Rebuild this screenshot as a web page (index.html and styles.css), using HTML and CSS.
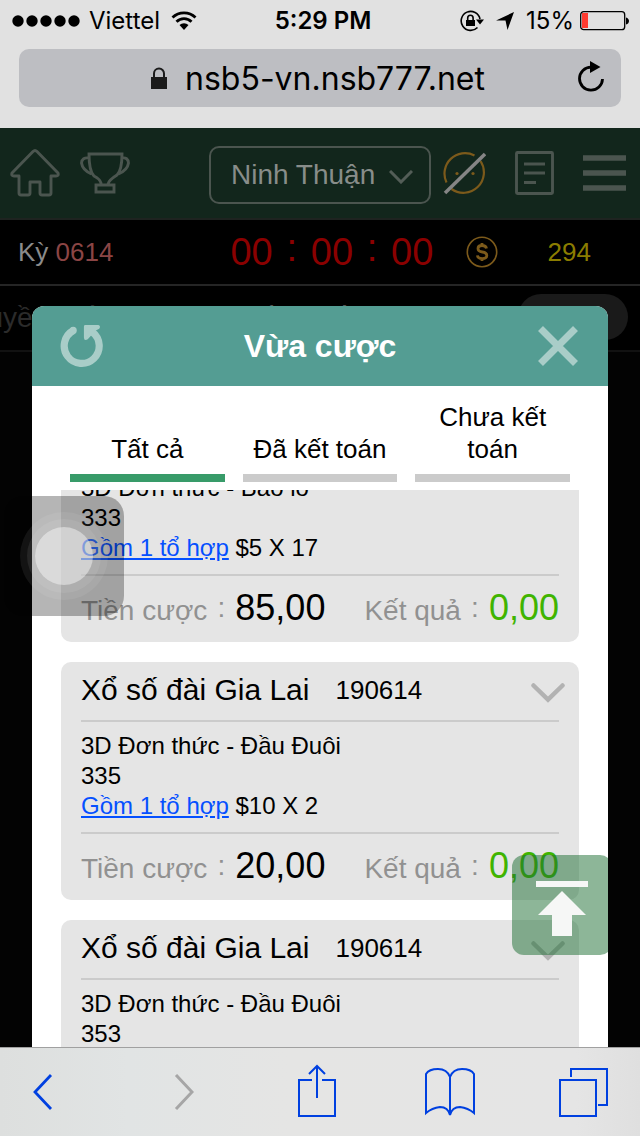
FILE: index.html
```html
<!DOCTYPE html>
<html lang="vi">
<head>
<meta charset="utf-8">
<meta name="viewport" content="width=device-width, initial-scale=1">
<title>Vừa cược</title>
<link rel="stylesheet" href="styles.css">
</head>
<body>
<header class="chrome">
  <div class="status">
    <div class="status-left">
      <svg width="68" height="12" viewBox="0 0 68 12"><circle cx="6" cy="6" r="5.7"/><circle cx="20" cy="6" r="5.7"/><circle cx="34" cy="6" r="5.7"/><circle cx="48" cy="6" r="5.7"/><circle cx="62" cy="6" r="5.7"/></svg>
      <span>Viettel</span>
      <svg class="wifi" width="26" height="20" viewBox="0 0 26 20"><path d="M1.500 6.500a16.500 16.500 0 0 1 23 0M5.500 10.800a10.500 10.500 0 0 1 15 0" fill="none" stroke="#000" stroke-width="2.800"/><path d="M8.500 14a6.500 6.500 0 0 1 9 0L13 19z"/></svg>
    </div>
    <span class="time">5:29 PM</span>
    <div class="status-right">
      <svg width="24" height="22" viewBox="0 0 24 22"><path d="M17.500 17.500A9.500 9.500 0 1 1 20 9" fill="none" stroke="#000" stroke-width="1.600"/><path d="M16 9.500h8l-4 5zM6 10h9v6H6z"/><path d="M7.700 10V8a2.700 2.700 0 0 1 5.400 0v2" fill="none" stroke="#000" stroke-width="1.600"/></svg>
      <svg width="18" height="18" viewBox="0 0 18 18"><path d="M18 0L11.500 18 9.500 8.500H0z"/></svg>
      <span>15%</span>
      <svg class="battery" width="50" height="20" viewBox="0 0 50 20"><rect x=".7" y=".7" width="44" height="18" rx="3" fill="none" stroke="#000" stroke-width="1.300"/><rect x="2" y="2" width="6" height="15" fill="#ff3b30"/><path d="M46 6.500c4 1 4 6 0 7z"/></svg>
    </div>
  </div>
  <div class="address">
    <span class="url"><svg width="16" height="22" viewBox="0 0 16 22"><path d="M0 10h16v12H0z" fill="#1b1b1b"/><path d="M3 11V6.500a5 5 0 0 1 10 0V11" fill="none" stroke="#1b1b1b" stroke-width="2"/></svg>nsb5-vn.nsb777.net</span>
    <button class="reload" aria-label="Reload"><svg width="28" height="32" viewBox="0 0 28 32"><path d="M14 6.200A11.500 11.500 0 1 0 25.500 18" fill="none" stroke="#000" stroke-width="2.800"/><path d="M13 0l10.500 6L13 12z"/></svg></button>
  </div>
</header>

<main class="page">
  <nav class="topbar">
    <div class="links">
      <a href="#" aria-label="Home"><svg width="50" height="50" viewBox="0 0 50 50"><path d="M23 3.500q2-2 4 0L48 25q1 3-2 3h-5v17q0 2-2 2h-7q-2 0-2-2V34H20v11q0 2-2 2h-7q-2 0-2-2V28H4q-3 0-2-3z" fill="none" stroke="#4b554f" stroke-width="2.900" stroke-linejoin="round"/></svg></a>
      <a href="#" aria-label="Trophy"><svg width="50" height="44" viewBox="0 0 50 44"><path d="M9 3h33q0 16-5 21-8 5-9 9v1h6v7H16v-7h5v-2q-1-4-7-7Q9 20 9 3zM9 7Q2 6 1.500 12q1 7 10 11M42 7q6-1 6.500 5-1 7-10 11M16 34h18" fill="none" stroke="#4b554f" stroke-width="2.900"/></svg></a>
    </div>
    <div class="picker">
      <select aria-label="Khu vực"><option>Ninh Thuận</option></select>
      <svg width="24" height="14" viewBox="0 0 24 14"><path d="M1 1l11 11L23 1" fill="none" stroke="#535d57" stroke-width="3"/></svg>
    </div>
    <div class="tools">
      <button aria-label="Mute"><svg width="43" height="44" viewBox="0 0 43 44"><path d="M31.500 4.500A20.500 20.500 0 0 0 3.500 31.500M37.500 10A20.500 20.500 0 0 1 8.500 38" fill="none" stroke="#7c5a1b" stroke-width="2.200"/><circle cx="14" cy="22.500" r="1.600" fill="#7c5a1b"/><circle cx="30" cy="22.500" r="1.600" fill="#7c5a1b"/><path d="M2 42L42 3" stroke="#858585" stroke-width="3.500"/></svg></button>
      <button aria-label="Notes"><svg width="39" height="44" viewBox="0 0 39 44"><rect x="1.500" y="1.500" width="36" height="41" rx="1" fill="none" stroke="#4b554f" stroke-width="2.900"/><path d="M9 13h21M9 22h21M9 31.500h12" stroke="#4b554f" stroke-width="3"/></svg></button>
      <button aria-label="Menu"><svg width="43" height="36" viewBox="0 0 43 36"><path d="M0 3h43M0 18h43M0 33h43" stroke="#4b554f" stroke-width="5.500"/></svg></button>
    </div>
  </nav>
  <section class="draw">
    <div class="period">Kỳ <span>0614</span></div>
    <div class="clock">00<i class="colon">:</i>00<i class="colon">:</i>00</div>
    <svg class="coin" width="32" height="32" viewBox="0 0 32 32"><circle cx="16" cy="16" r="14.700" fill="none" stroke="#7c5a1b" stroke-width="1.600"/><path d="M20.500 12.500q-.6-3-4.500-3-4 0-4 3t4.300 3.500q4.500.6 4.500 3.600 0 3-4.500 3-4.600 0-4.900-3.200M16 7v3M16 22v3" fill="none" stroke="#7c5a1b" stroke-width="2.800"/></svg>
    <div class="balance">294</div>
  </section>
  <section class="games">
    <span>Truyền thống</span>
    <span class="bright">Truyền thống</span>
    <i class="pill"></i>
  </section>

  <section class="modal" role="dialog" aria-labelledby="dialog-title">
    <header class="modal-head">
      <button aria-label="Refresh"><svg width="44" height="44" viewBox="0 0 46 46"><path d="M14 6.800A18.300 18.300 0 1 0 34 8.500" fill="none" stroke="#a9cdc8" stroke-width="7.500"/><circle cx="13.800" cy="6.700" r="3.700" fill="#a9cdc8"/><path d="M26 1h14q3 1 1 4l-4 2L29 16q-4 2-4-2V3q0-2 1-2z" fill="#a9cdc8"/></svg></button>
      <h1 id="dialog-title">Vừa cược</h1>
      <button aria-label="Close"><svg width="40" height="40" viewBox="0 0 40 40"><path d="M2.500 2.500l35 35M37.500 2.500l-35 35" stroke="#a9cdc8" stroke-width="7"/></svg></button>
    </header>
    <div class="tabs">
      <button class="tab active">Tất cả</button>
      <button class="tab">Đã kết toán</button>
      <button class="tab">Chưa kết toán</button>
    </div>
    <div class="scroller">
      <div class="list">
        <article class="card">
          <header class="card-head"><h2>Xổ số đài Gia Lai</h2><span>190614</span><svg width="34" height="20" viewBox="0 0 34 20"><path d="M2.500 2.500L17 16.500 31.500 2.500" fill="none" stroke="#b2b2b2" stroke-width="4.500" stroke-linecap="round"/></svg></header>
          <div class="bet">3D Đơn thức - Bao lô<br>333<br><a href="#">Gồm 1 tổ hợp</a> $5 X 17</div>
          <footer class="sum"><div>Tiền cược<i class="colon">:</i><b>85,00</b></div><div>Kết quả<i class="colon">:</i><b class="win">0,00</b></div></footer>
        </article>
        <article class="card">
          <header class="card-head"><h2>Xổ số đài Gia Lai</h2><span>190614</span><svg width="34" height="20" viewBox="0 0 34 20"><path d="M2.500 2.500L17 16.500 31.500 2.500" fill="none" stroke="#b2b2b2" stroke-width="4.500" stroke-linecap="round"/></svg></header>
          <div class="bet">3D Đơn thức - Đầu Đuôi<br>335<br><a href="#">Gồm 1 tổ hợp</a> $10 X 2</div>
          <footer class="sum"><div>Tiền cược<i class="colon">:</i><b>20,00</b></div><div>Kết quả<i class="colon">:</i><b class="win">0,00</b></div></footer>
        </article>
        <article class="card">
          <header class="card-head"><h2>Xổ số đài Gia Lai</h2><span>190614</span><svg width="34" height="20" viewBox="0 0 34 20"><path d="M2.500 2.500L17 16.500 31.500 2.500" fill="none" stroke="#b2b2b2" stroke-width="4.500" stroke-linecap="round"/></svg></header>
          <div class="bet">3D Đơn thức - Đầu Đuôi<br>353</div>
        </article>
      </div>
    </div>
    <button class="to-top" aria-label="Top"><svg width="52" height="58" viewBox="0 0 52 58"><path d="M0 1h52v6H0zM26 11l24 24H36v21H16V35H2z" fill="#f6f7f6"/></svg></button>
  </section>
  <div class="touch"><i></i></div>
</main>

<nav class="toolbar">
  <button class="back" aria-label="Back"><svg width="20" height="36" viewBox="0 0 20 36"><path d="M18 1L2 18l16 17" fill="none" stroke="#0040e0" stroke-width="2.800"/></svg></button>
  <button aria-label="Forward"><svg width="20" height="36" viewBox="0 0 20 36"><path d="M2 1l16 17L2 35" fill="none" stroke="#a6a6a6" stroke-width="3"/></svg></button>
  <button class="share" aria-label="Share"><svg width="40" height="54" viewBox="0 0 40 54"><path d="M15 17H2v36h36V17H25M20 35V3M12 11l8-8 8 8" fill="none" stroke="#0040e0" stroke-width="2"/></svg></button>
  <button aria-label="Bookmarks"><svg width="50" height="50" viewBox="0 0 50 50"><path d="M25 48V10Q22 2 13 2 4 2 1 7v39q6-5 14-6 8 0 10 8 2-8 10-8 8 1 14 6V7Q46 2 37 2 28 2 25 10" fill="none" stroke="#0040e0" stroke-width="2"/></svg></button>
  <button aria-label="Tabs"><svg width="50" height="50" viewBox="0 0 50 50"><path d="M2 13h36v36H2zM13 10V2h36v36h-9" fill="none" stroke="#0040e0" stroke-width="2"/></svg></button>
</nav>
</body>
</html>
```
FILE: styles.css
```css
* {
  box-sizing: border-box;
}

body {
  margin: 0;
  height: 100vh;
  display: flex;
  flex-direction: column;
  overflow: hidden;
  background: #000;
  color: #000;
  font-family: "Liberation Sans", "Noto Sans CJK TC", sans-serif;
}

button {
  margin: 0;
  padding: 0;
  border: 0;
  background: none;
  color: inherit;
  font: inherit;
}

svg {
  display: block;
  flex: none;
}

/* Separator that takes one full em, with the mark in its middle */
.colon {
  display: inline-block;
  width: 1em;
  font-style: normal;
  text-align: center;
}

/* Browser chrome */
.chrome {
  flex: none;
  padding-bottom: 21px;
  background: #e1e1e1;
  font-family: Inter, sans-serif;
}

.status {
  display: grid;
  grid-template-columns: 1fr auto 1fr;
  align-items: center;
  height: 41px;
  padding: 0 10px 0 12px;
  font-size: 24px;
}

.status-left,
.status-right {
  display: flex;
  align-items: center;
  gap: 9px;
}

.status-left .wifi {
  margin-left: 2px;
}

.status-right {
  justify-content: flex-end;
  gap: 12px;
}

.status-right .battery {
  margin-left: -6px;
}

.time {
  padding-left: 4px;
  font-weight: 600;
}

.address {
  position: relative;
  display: flex;
  align-items: center;
  justify-content: center;
  height: 58px;
  margin: 8px 19px 0;
  padding-right: 4px;
  border-radius: 10px;
  background: #bdbec2;
}

.url {
  display: flex;
  align-items: center;
  gap: 18px;
  font-size: 32px;
}

.reload {
  position: absolute;
  right: 16px;
  top: 12px;
}

/* Dimmed page */
.page {
  position: relative;
  flex: 1;
  min-height: 0;
  overflow: hidden;
  background: #030303;
}

.topbar {
  display: flex;
  align-items: center;
  height: 92px;
  padding: 0 14px 0 10px;
  border-bottom: 2px solid #1e2320;
  background: #12261c;
}

.links {
  display: flex;
  align-items: center;
  gap: 20px;
}

.picker {
  position: relative;
  width: 222px;
  margin: 4px 12px 0 auto;
}

.picker select {
  appearance: none;
  display: block;
  width: 100%;
  height: 58px;
  padding: 0 20px 2px;
  border: 2px solid #4b554f;
  border-radius: 10px;
  background: none;
  color: #888d8a;
  font: inherit;
  font-size: 28px;
}

.picker svg {
  position: absolute;
  right: 18px;
  top: 24px;
}

.tools {
  display: flex;
  align-items: center;
  gap: 29px;
}

.draw {
  display: grid;
  grid-template-columns: 36fr auto 33px auto 24fr;
  align-items: center;
  height: 66px;
  padding-left: 18px;
  border-bottom: 2px solid #252525;
  background: #000;
  font-size: 26px;
}

.period {
  color: #8b8b8b;
}

.period span {
  color: #8b4545;
}

.clock {
  color: #8b0000;
  font-size: 38px;
  line-height: 60px;
}

.clock .colon {
  line-height: 50px;
  vertical-align: 4px;
}

.coin {
  grid-column: 4;
}

.balance {
  color: #8b7d00;
  text-align: center;
}

.games {
  display: flex;
  align-items: center;
  gap: 88px;
  height: 66px;
  margin-left: -38px;
  padding-right: 12px;
  border-bottom: 2px solid #121212;
  background: #000;
  color: #2b2b2b;
  font-size: 28px;
  white-space: nowrap;
}

.games .bright {
  color: #555;
}

.games .pill {
  flex: none;
  width: 110px;
  height: 46px;
  margin: 0 0 3px auto;
  border-radius: 23px;
  background: #1a1a1a;
}

/* Dialog */
.modal {
  position: absolute;
  inset: 178px 5% 0;
  display: flex;
  flex-direction: column;
  overflow: hidden;
  border-radius: 12px 12px 0 0;
  background: #fff;
}

.modal-head {
  display: grid;
  grid-template-columns: 44px 1fr 44px;
  align-items: center;
  justify-items: center;
  flex: none;
  height: 80px;
  padding: 0 28px;
  background: #549d93;
  color: #fff;
}

.modal-head h1 {
  margin: 0;
  font-size: 32px;
}

.tabs {
  display: grid;
  grid-template-columns: repeat(3, 1fr);
  align-items: end;
  gap: 18px;
  flex: none;
  padding: 15px 38px 8px;
}

.tab {
  padding-bottom: 9px;
  border-bottom: 8px solid #cbcbcb;
  font-size: 26px;
  line-height: 32px;
}

.tab.active {
  border-color: #389b69;
}

.scroller {
  flex: 1;
  min-height: 0;
  margin: 0 29px;
  overflow: hidden;
}

.list {
  display: grid;
  gap: 20px;
  margin-top: -86px;
}

.card {
  padding: 0 20px;
  border-radius: 10px;
  background: #e5e5e5;
}

.card-head {
  display: flex;
  align-items: center;
  gap: 26px;
  height: 60px;
  padding-bottom: 2px;
  border-bottom: 2px solid #cbcbcb;
  font-size: 26px;
}

.card-head h2 {
  margin: 0;
  font-size: 30px;
  font-weight: 400;
}

.card-head svg {
  margin: 6px -6px 0 auto;
}

.bet {
  padding: 9px 0 11px;
  font-size: 24px;
  line-height: 30px;
}

.bet a {
  color: #0550ff;
}

.sum {
  display: flex;
  justify-content: space-between;
  height: 68px;
  border-top: 2px solid #cbcbcb;
  color: #919191;
  font-size: 28px;
  line-height: 64px;
}

.sum .colon {
  line-height: 50px;
  vertical-align: 3px;
}

.sum b {
  color: #000;
  font-size: 36px;
  font-weight: 400;
}

.sum .win {
  color: #40b400;
}

.to-top {
  position: absolute;
  right: -4px;
  bottom: 92px;
  display: grid;
  place-items: center;
  width: 100px;
  height: 100px;
  padding-top: 8px;
  border-radius: 12px;
  background: rgba(27, 109, 49, .5);
}

/* Floating touch control */
.touch {
  position: absolute;
  left: 4px;
  top: 368px;
  display: grid;
  place-items: center;
  width: 120px;
  height: 120px;
  border-radius: 20px;
  background: rgba(0, 0, 0, .29);
}

.touch i {
  width: 58px;
  height: 58px;
  border-radius: 50%;
  background: rgba(255, 255, 255, .5);
  box-shadow: 0 0 0 8px rgba(255, 255, 255, .08), 0 0 0 15px rgba(255, 255, 255, .07);
}

/* Browser toolbar */
.toolbar {
  display: flex;
  align-items: center;
  justify-content: space-between;
  flex: none;
  height: 89px;
  padding: 0 32px 0 10px;
  border-top: 1px solid #a0a0a0;
  background: linear-gradient(90deg, #dddfde, #e1e4e4 20%, #e5e5e4 45%, #e5e5e5 90%, #dfdfdf);
}

.toolbar button {
  display: grid;
  place-items: center;
  width: 50px;
  height: 60px;
}

.toolbar .back {
  width: 66px;
}

.toolbar .share {
  padding-bottom: 4px;
}
```
